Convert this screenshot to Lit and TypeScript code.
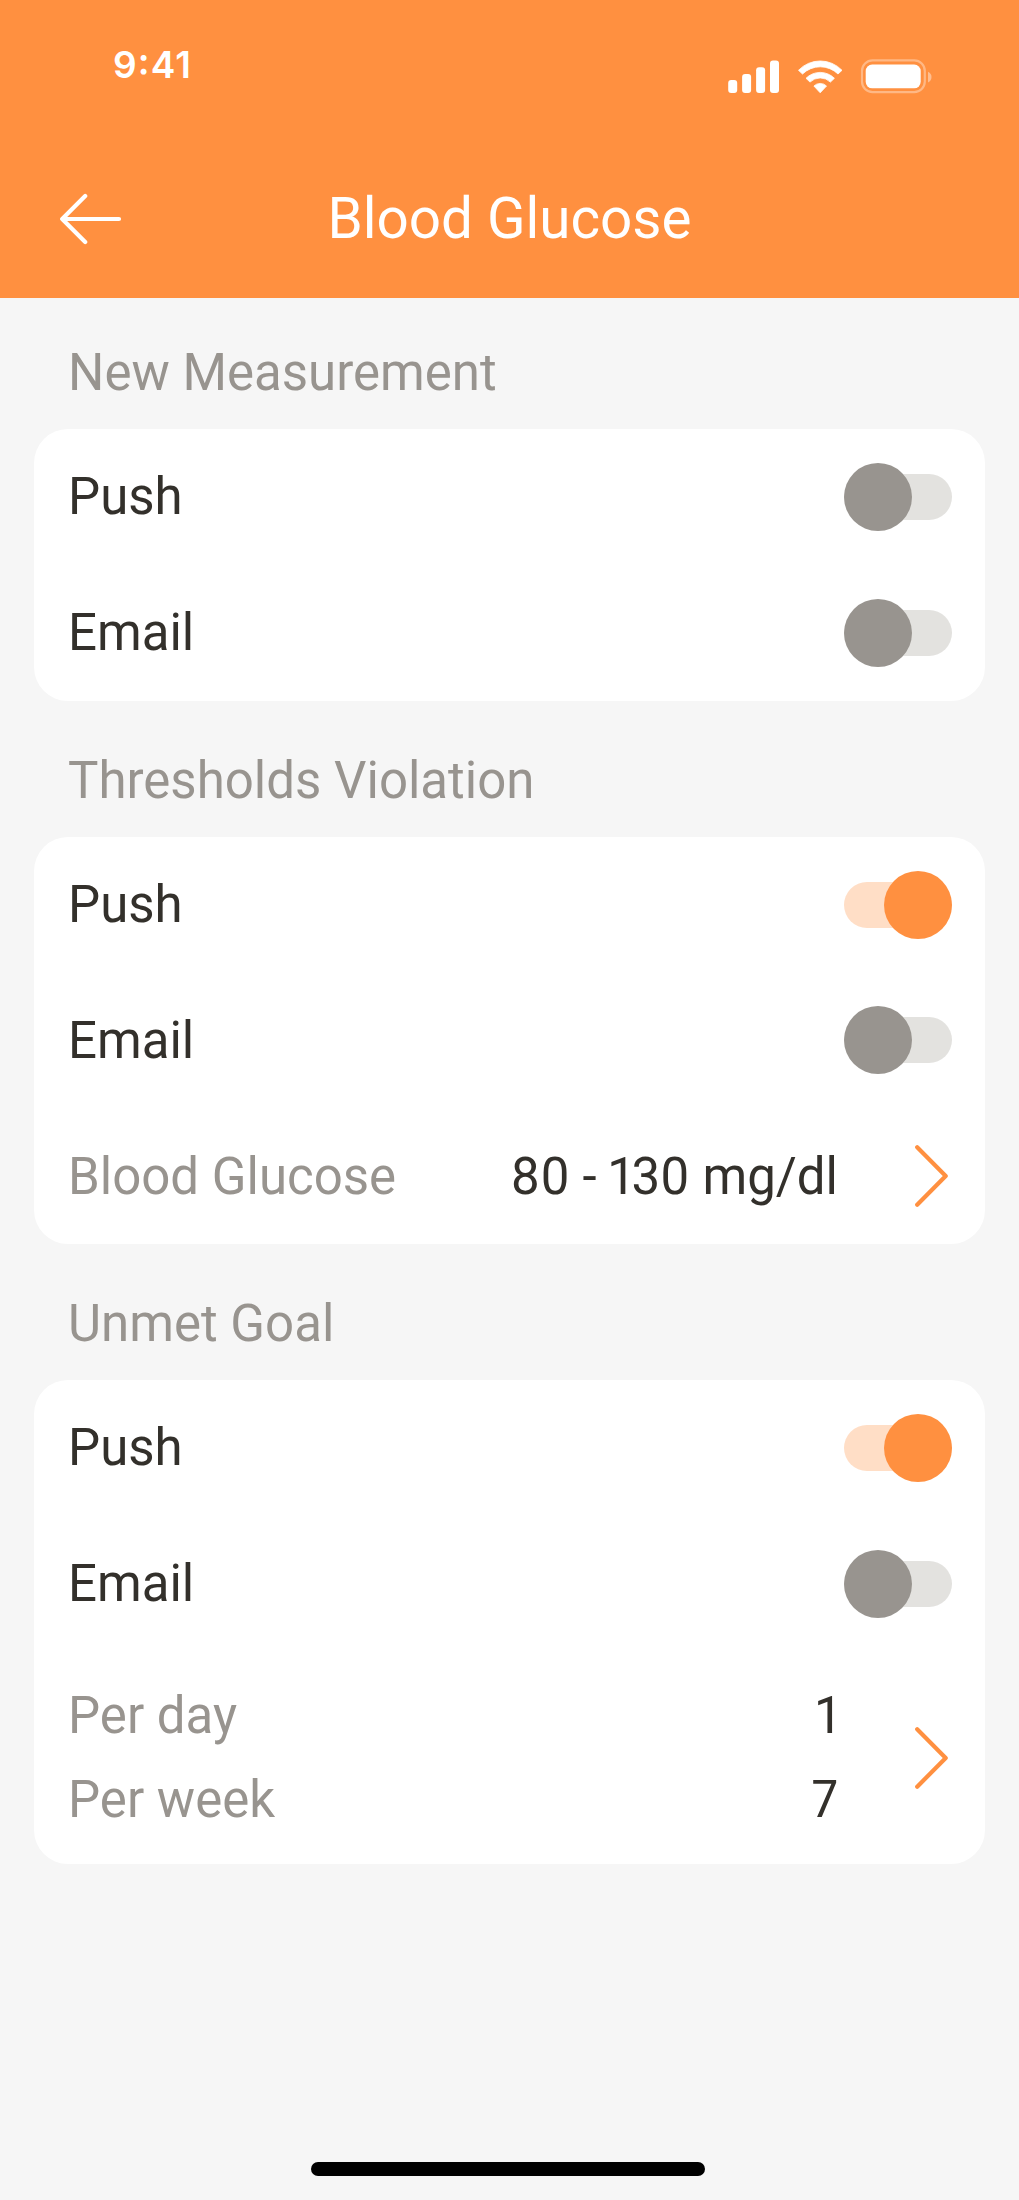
import { LitElement, html, css } from 'lit';
import { customElement } from 'lit/decorators.js';

const toggle = (on: boolean) => html`<span class="toggle ${on ? 'on' : ''}"><i></i><b></b></span>`;
const row = (label: string, on: boolean) => html`<div class="row"><span class="label">${label}</span>${toggle(on)}</div>`;
const chevron = () => html`<svg class="chevron" width="33" height="62" viewBox="0 0 33 62" fill="none" stroke="#ff9040" stroke-width="4.2" stroke-linecap="round" stroke-linejoin="round"><path d="M2.2 2.3L30.7 31L2.2 59.7"/></svg>`;

@customElement('app-root')
export class AppRoot extends LitElement {
  static styles = css`
    :host { display: block; font-family: Roboto, sans-serif; color: #33302b; }
    .screen { height: 2200px; background: #f6f6f6; display: flex; flex-direction: column; box-sizing: border-box; }
    .header { height: 298px; background: #ff9040; color: #fff; flex: none; }
    .status { height: 140px; display: flex; justify-content: space-between; box-sizing: border-box; padding: 41px 86px 0 113px; }
    .time { font: 600 37px/48px Inter, sans-serif; letter-spacing: 1.1px; font-feature-settings: "calt", "case"; }
    .icons { display: block; margin-top: 15px; }
    .nav { height: 158px; display: grid; grid-template-columns: 120px 1fr 120px; align-items: center; box-sizing: border-box; }
    .back { margin-left: 59px; }
    .title { font-size: 56.6px; line-height: 66px; text-align: center; white-space: nowrap; }
    .content { padding: 0 34px; }
    h2 { margin: 0; font-weight: 400; font-size: 51px; line-height: 60px; padding: 49.87px 34px 26px; color: #98948f; }
    h2:first-child { padding-top: 45px; }
    .card { background: #fff; border-radius: 34px; padding: 0 33.4px 0 34px; }
    .row { height: 135.87px; display: flex; align-items: center; font-size: 51px; line-height: 60px; }
    .row .label, .row .value, .lines { padding-top: 1px; }
    .label { flex: 1; }
    .muted { color: #98948f; }
    .value { font-variant-numeric: proportional-nums; }
    .chevron { margin-left: 77px; margin-right: 3.6px; }
    .toggle { width: 107.6px; height: 68px; position: relative; }
    .toggle i { position: absolute; inset: 11px 0; border-radius: 23px; background: #e3e2df; }
    .toggle b { position: absolute; left: 0; top: 0; width: 68px; height: 68px; border-radius: 50%; background: #98948f; }
    .toggle.on i { background: #ffdec6; }
    .toggle.on b { left: 39.6px; background: #ff9040; }
    .goal { height: 212.2px; display: flex; align-items: center; font-size: 51px; line-height: 60px; }
    .lines { flex: 1; display: grid; gap: 24px; }
    .line { display: flex; justify-content: space-between; }
    .home { width: 394px; height: 14px; border-radius: 7px; background: #000; margin: auto 0 24px 311px; }
  `;
  render() {
    return html`<div class="screen">
      <div class="header">
        <div class="status"><span class="time">9:41</span>
          <svg class="icons" width="206" height="40" viewBox="0 0 206 40" fill="#fff">
            <rect x="1.2" y="24" width="9" height="13" rx="3"/><rect x="15.1" y="18" width="9" height="19" rx="3"/><rect x="29.1" y="11.2" width="9" height="25.8" rx="3"/><rect x="43" y="4.6" width="9" height="32.4" rx="3"/>
            <g stroke="#fff" stroke-width=".8" stroke-linejoin="round">
              <path d="M71.5 14.3A30 30 0 0 1 115 14.3L111 18A25.5 25.5 0 0 0 75.5 18Z"/>
              <path d="M79 22.3A20 20 0 0 1 107.4 22.3L103.4 26.1A14.6 14.6 0 0 0 83 26.1Z"/>
              <path d="M86.9 30A9 9 0 0 1 99.5 30L93.2 36.8Z"/>
            </g>
            <rect x="135" y="4.4" width="62.8" height="31.7" rx="10.5" fill="none" stroke="#fff" stroke-width="2.2" opacity=".36"/>
            <rect x="138.7" y="8.6" width="55" height="23.7" rx="6.5"/>
            <path d="M201 15.7A5.9 5.9 0 0 1 201 26.5Z" opacity=".42"/>
          </svg></div>
        <div class="nav"><svg class="back" width="64" height="52" viewBox="0 0 64 52" fill="none" stroke="#fff" stroke-width="4.2" stroke-linecap="round" stroke-linejoin="round"><path d="M26.2 2.9L3.2 26L26.2 49M3.2 26H60"/></svg><div class="title">Blood Glucose</div></div>
      </div>
      <div class="content">
        <h2>New Measurement</h2>
        <div class="card">${row('Push', false)}${row('Email', false)}</div>
        <h2>Thresholds Violation</h2>
        <div class="card">${row('Push', true)}${row('Email', false)}
          <div class="row"><span class="label muted">Blood Glucose</span><span class="value">80 - 130 mg/dl</span>${chevron()}</div></div>
        <h2>Unmet Goal</h2>
        <div class="card">${row('Push', true)}${row('Email', false)}
          <div class="goal"><div class="lines"><div class="line"><span class="muted">Per day</span><span class="value">1</span></div><div class="line"><span class="muted">Per week</span><span class="value">7</span></div></div>${chevron()}</div></div>
      </div>
      <div class="home"></div>
    </div>`;
  }
}
